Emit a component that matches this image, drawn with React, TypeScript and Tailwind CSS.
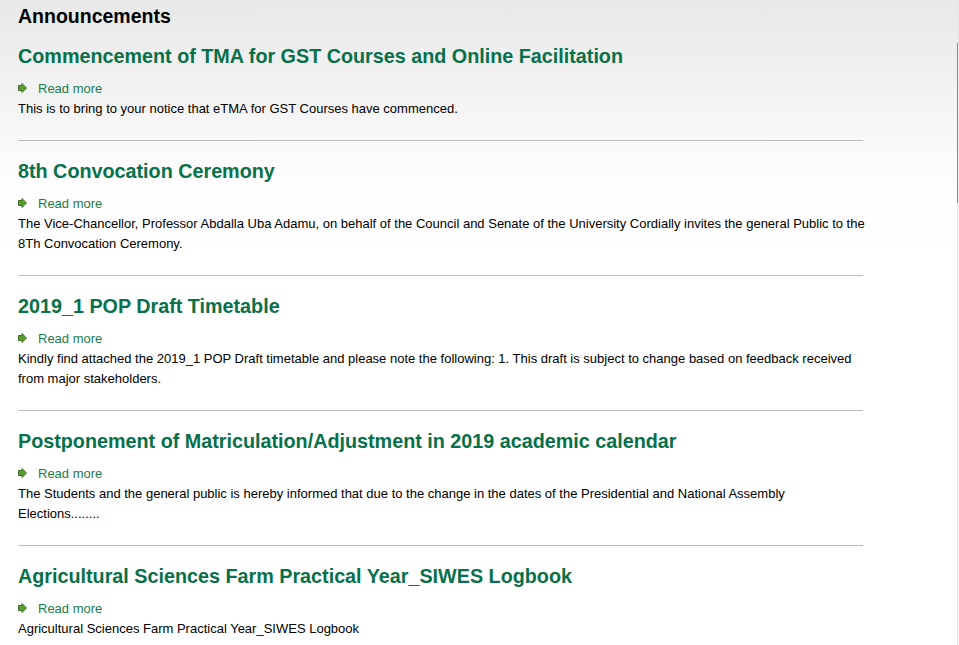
const announcements = [
  {
    title: 'Commencement of TMA for GST Courses and Online Facilitation',
    body: 'This is to bring to your notice that eTMA for GST Courses have commenced.',
  },
  {
    title: '8th Convocation Ceremony',
    body: 'The Vice-Chancellor, Professor Abdalla Uba Adamu, on behalf of the Council and Senate of the University Cordially invites the general Public to the 8Th Convocation Ceremony.',
  },
  {
    title: '2019_1 POP Draft Timetable',
    body: 'Kindly find attached the 2019_1 POP Draft timetable and please note the following: 1. This draft is subject to change based on feedback received from major stakeholders.',
  },
  {
    title: 'Postponement of Matriculation/Adjustment in 2019 academic calendar',
    body: 'The Students and the general public is hereby informed that due to the change in the dates of the Presidential and National Assembly Elections........',
  },
  {
    title: 'Agricultural Sciences Farm Practical Year_SIWES Logbook',
    body: 'Agricultural Sciences Farm Practical Year_SIWES Logbook',
  },
];

function Arrow() {
  return (
    <svg width="9" height="10" viewBox="0 0 9 10" className="shrink-0">
      <polygon
        points="0.5,2.5 4,2.5 4,0.5 8.5,5 4,9.5 4,7.5 0.5,7.5"
        fill="#5c9e2e"
        stroke="#3f6f28"
        strokeWidth="1"
        strokeLinejoin="round"
      />
    </svg>
  );
}

export default function App() {
  return (
    <div className="flex h-[645px] overflow-hidden bg-white font-['Liberation_Sans',Arial,sans-serif]">
      <main className="flex-1 bg-[linear-gradient(#e8e8e8,#fdfdfd_180px,#ffffff_260px)] px-[18px]">
        <h2 className="pt-[4px] text-[19.5px] font-bold leading-[24px] text-black">
          Announcements
        </h2>

        <div className="w-[845px]">
          {announcements.map((item, i) => (
            <div
              key={item.title}
              className={`border-b border-[#bcbcbc] pb-[21px] ${i === 0 ? 'pt-[16px]' : 'pt-[18px]'}`}
            >
              <h3 className="text-[19.75px] font-bold leading-[24px] text-[#08704a]">
                {item.title}
              </h3>
              <a
                href="#"
                className="mt-[13px] flex h-[16px] items-center gap-[11px] text-[13px] leading-[16px] text-[#1f7a45]"
              >
                <span className="-mt-[3px]">
                  <Arrow />
                </span>
                Read more
              </a>
              <p className="-mr-[6px] mt-[2px] text-[13px] leading-[20px] text-black">
                {item.body}
              </p>
            </div>
          ))}
        </div>
      </main>

      {/* scrollbar edge */}
      <div className="flex w-[2px] flex-col">
        <div className="h-[43px] bg-[#e6e6e6]" />
        <div className="h-[160px] border-l border-[#8a8a8a] bg-[#f0f0f0]" />
        <div className="flex-1 border-l border-[#e2e2e2] bg-[#f7f7f7]" />
      </div>
    </div>
  );
}
